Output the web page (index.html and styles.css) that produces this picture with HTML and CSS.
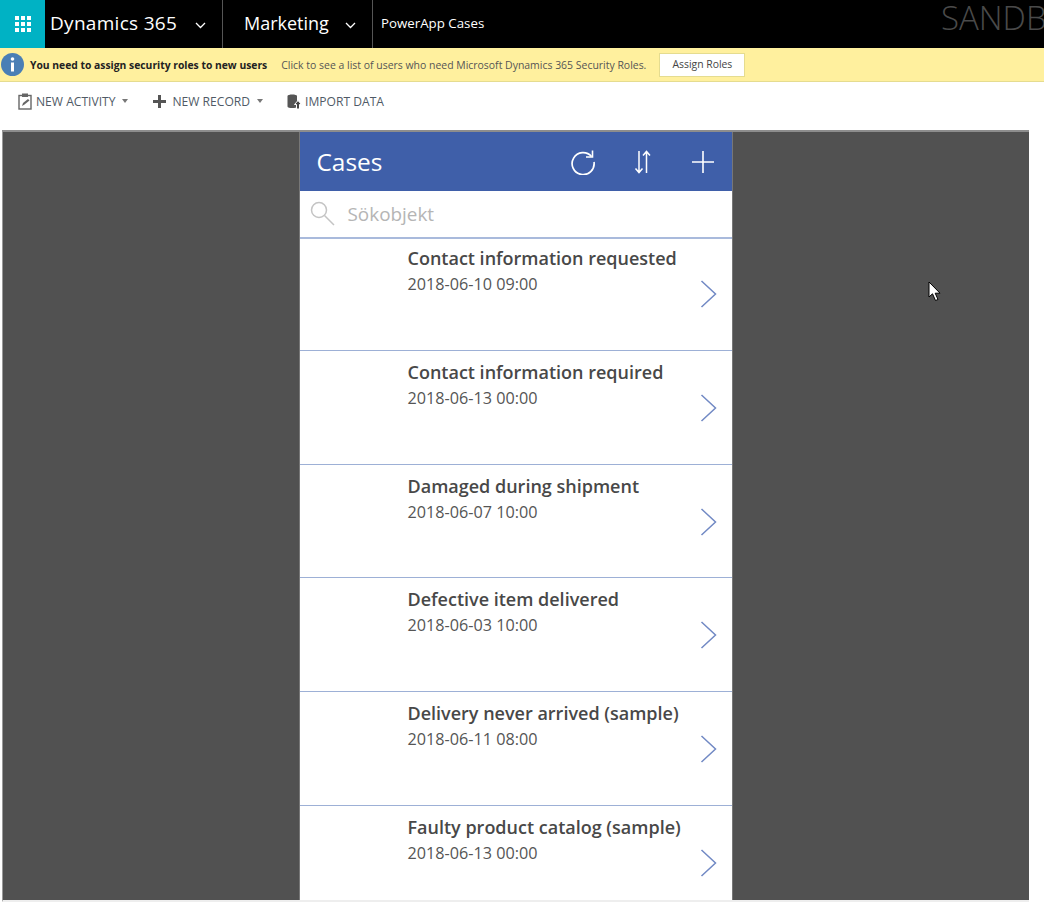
FILE: index.html
```html
<!DOCTYPE html>
<html lang="en">
<head>
  <meta charset="UTF-8" />
  <title>PowerApp Cases</title>
  <link rel="stylesheet" href="styles.css">
</head>
<body>
  <header class="navbar">
    <div class="waffle">
      <svg width="16" height="16" viewBox="0 0 16 16" fill="#fff">
        <rect x="0" y="0" width="4" height="4"/><rect x="6" y="0" width="4" height="4"/><rect x="12" y="0" width="4" height="4"/>
        <rect x="0" y="6" width="4" height="4"/><rect x="6" y="6" width="4" height="4"/><rect x="12" y="6" width="4" height="4"/>
        <rect x="0" y="12" width="4" height="4"/><rect x="6" y="12" width="4" height="4"/><rect x="12" y="12" width="4" height="4"/>
      </svg>
    </div>
    <div class="nav-item nav-brand">
      <span>Dynamics 365</span>
      <svg class="nav-caret" width="11" height="7" viewBox="0 0 11 7"><path d="M1 1l4.500 4.500L10 1" fill="none" stroke="#fff" stroke-width="1.300"/></svg>
    </div>
    <div class="nav-item nav-area">
      <span>Marketing</span>
      <svg class="nav-caret" width="11" height="7" viewBox="0 0 11 7"><path d="M1 1l4.500 4.500L10 1" fill="none" stroke="#fff" stroke-width="1.300"/></svg>
    </div>
    <div class="nav-item nav-page">PowerApp Cases</div>
    <div class="sandbox">SANDBOX</div>
  </header>

  <div class="notice">
    <svg class="notice-icon" width="23" height="23" viewBox="0 0 23 23">
      <circle cx="11.500" cy="11.500" r="11.500" fill="#4a7fb5"/>
      <rect x="10" y="9.500" width="3" height="9" fill="#fff"/>
      <circle cx="11.500" cy="6" r="1.800" fill="#fff"/>
    </svg>
    <strong class="notice-title">You need to assign security roles to new users</strong>
    <span class="notice-text">Click to see a list of users who need Microsoft Dynamics 365 Security Roles.</span>
    <button class="notice-btn">Assign Roles</button>
  </div>

  <div class="toolbar">
    <div class="tool tool-activity">
      <svg width="14" height="17" viewBox="0 0 14 17">
        <rect x="1" y="2.500" width="12" height="13.500" fill="none" stroke="#666" stroke-width="1.400"/>
        <rect x="4" y="0.500" width="6" height="3.500" fill="#666"/>
        <path d="M4 13l1-3 5-4 1.500 1.500-5 4z" fill="#666"/>
      </svg>
      <span>NEW ACTIVITY</span>
      <i class="tool-caret"></i>
    </div>
    <div class="tool tool-record">
      <svg width="13" height="13" viewBox="0 0 13 13"><path d="M5 0h3v5h5v3H8v5H5V8H0V5h5z" fill="#555"/></svg>
      <span>NEW RECORD</span>
      <i class="tool-caret"></i>
    </div>
    <div class="tool tool-import">
      <svg width="15" height="15" viewBox="0 0 15 15">
        <path d="M0.500 2C0.500 0 10 0 10 2V12.500C10 14.500 0.500 14.500 0.500 12.500z" fill="#555"/>
        <path d="M9.500 15V10.500H7.500L11 6.500l3.500 4h-2V15z" fill="#444" stroke="#fff" stroke-width="1"/>
      </svg>
      <span>IMPORT DATA</span>
    </div>
  </div>

  <main class="stage">
    <section class="app">
      <div class="app-header">
        <h1>Cases</h1>
        <svg class="app-icon icon-refresh" width="26" height="26" viewBox="0 0 26 26" fill="none" stroke="#fff" stroke-width="1.700">
          <path d="M21.500 7.500A11 11 0 1 0 24 13"/>
          <path d="M22.500 1.500v6.500H16" stroke-width="1.600"/>
        </svg>
        <svg class="app-icon icon-sort" width="18" height="24" viewBox="0 0 18 24" fill="none" stroke="#fff" stroke-width="1.500">
          <path d="M5 1v21M1.500 18.500L5 22.500l3.500-4"/>
          <path d="M12.500 23V2M9 5.500L12.500 1.500 16 5.500"/>
        </svg>
        <svg class="app-icon icon-add" width="24" height="24" viewBox="0 0 24 24" fill="none" stroke="#fff" stroke-width="1.600">
          <path d="M12 1v22M1 12h22"/>
        </svg>
      </div>
      <div class="search">
        <svg width="25" height="25" viewBox="0 0 25 25" fill="none" stroke="#c4c4c4" stroke-width="1.500">
          <circle cx="9" cy="9" r="7.500"/>
          <path d="M14.500 14.500L24 24"/>
        </svg>
        <span>Sökobjekt</span>
      </div>
      <ul class="cases">
        <li class="case">
          <div class="case-text">
            <div class="case-title">Contact information requested</div>
            <div class="case-date">2018-06-10 09:00</div>
          </div>
          <svg class="chevron" width="17" height="28" viewBox="0 0 17 28"><path d="M1.500 1L15.500 14 1.500 27" fill="none" stroke="#7189c4" stroke-width="1.500"/></svg>
        </li>
        <li class="case">
          <div class="case-text">
            <div class="case-title">Contact information required</div>
            <div class="case-date">2018-06-13 00:00</div>
          </div>
          <svg class="chevron" width="17" height="28" viewBox="0 0 17 28"><path d="M1.500 1L15.500 14 1.500 27" fill="none" stroke="#7189c4" stroke-width="1.500"/></svg>
        </li>
        <li class="case">
          <div class="case-text">
            <div class="case-title">Damaged during shipment</div>
            <div class="case-date">2018-06-07 10:00</div>
          </div>
          <svg class="chevron" width="17" height="28" viewBox="0 0 17 28"><path d="M1.500 1L15.500 14 1.500 27" fill="none" stroke="#7189c4" stroke-width="1.500"/></svg>
        </li>
        <li class="case">
          <div class="case-text">
            <div class="case-title">Defective item delivered</div>
            <div class="case-date">2018-06-03 10:00</div>
          </div>
          <svg class="chevron" width="17" height="28" viewBox="0 0 17 28"><path d="M1.500 1L15.500 14 1.500 27" fill="none" stroke="#7189c4" stroke-width="1.500"/></svg>
        </li>
        <li class="case">
          <div class="case-text">
            <div class="case-title">Delivery never arrived (sample)</div>
            <div class="case-date">2018-06-11 08:00</div>
          </div>
          <svg class="chevron" width="17" height="28" viewBox="0 0 17 28"><path d="M1.500 1L15.500 14 1.500 27" fill="none" stroke="#7189c4" stroke-width="1.500"/></svg>
        </li>
        <li class="case">
          <div class="case-text">
            <div class="case-title">Faulty product catalog (sample)</div>
            <div class="case-date">2018-06-13 00:00</div>
          </div>
          <svg class="chevron" width="17" height="28" viewBox="0 0 17 28"><path d="M1.500 1L15.500 14 1.500 27" fill="none" stroke="#7189c4" stroke-width="1.500"/></svg>
        </li>
      </ul>
    </section>
    <svg class="cursor" width="14" height="21" viewBox="0 0 14 21">
      <path d="M1 1v15l3.500-3.200L7.500 19.500l2.500-1-2.800-6.300H12z" fill="#fff" stroke="#000" stroke-width="1"/>
    </svg>
  </main>
</body>
</html>
```

FILE: styles.css
```css
* {
  box-sizing: border-box;
}

html, body {
  overflow: hidden;
}

body {
  margin: 0;
  height: 916px;
  background: #fff;
  font-family: 'Open Sans', sans-serif;
}

/* top bar */
.navbar {
  display: flex;
  align-items: stretch;
  height: 48px;
  background: #000;
  color: #fff;
  overflow: hidden;
}

.waffle {
  width: 45px;
  background: #00b2c4;
  display: flex;
  align-items: center;
  justify-content: center;
  flex: none;
}

.nav-item {
  display: flex;
  align-items: center;
  flex: none;
  padding-bottom: 2px;
}

.nav-brand {
  width: 178px;
  padding-left: 5px;
  font-size: 19px;
  letter-spacing: 0.3px;
  border-right: 1px solid #555;
}

.nav-brand .nav-caret {
  margin: 4px 0 0 18px;
}

.nav-area {
  width: 150px;
  padding-left: 21px;
  font-size: 18px;
  border-right: 1px solid #555;
}

.nav-area .nav-caret {
  margin: 4px 0 0 16px;
}

.nav-page {
  padding-left: 8px;
  font-size: 13.300px;
}

.sandbox {
  margin-left: auto;
  margin-right: -60px;
  width: 163px;
  flex: none;
  font-size: 33px;
  font-weight: 300;
  line-height: 36px;
  color: #4a4a4a;
  white-space: nowrap;
}

/* notification */
.notice {
  display: flex;
  align-items: center;
  height: 34px;
  background: #fff09e;
  border-bottom: 1px solid #e5dc90;
  font-size: 10.460px;
  padding-left: 1px;
}

.notice-title {
  margin-left: 6px;
  color: #222;
  font-weight: 700;
  font-size: 10.330px;
}

.notice-text {
  margin-left: 14px;
  color: #555;
}

.notice-btn {
  margin-left: 13px;
  width: 86px;
  height: 24px;
  padding: 0 0 2px;
  background: #fff;
  border: 1px solid #e5dc90;
  color: #444;
  font-family: inherit;
  font-size: 10.400px;
}

/* command bar */
.toolbar {
  display: flex;
  align-items: center;
  height: 40px;
  padding: 0 0 2px 18px;
  margin-bottom: 8px;
  color: #505a66;
  font-size: 12.100px;
}

.tool {
  display: flex;
  align-items: center;
}

.tool span {
  margin-left: 4px;
}

.tool-record {
  margin-left: 25px;
}

.tool-record span {
  margin-left: 6px;
}

.tool-import {
  margin-left: 24px;
}

.tool-import span {
  margin-left: 3px;
}

.tool-caret {
  width: 0;
  height: 0;
  margin-left: 7px;
  border-left: 3.500px solid transparent;
  border-right: 3.500px solid transparent;
  border-top: 4px solid #777;
}

/* canvas */
.stage {
  position: relative;
  width: 1027px;
  height: 772px;
  margin-left: 2px;
  background: #515151;
  border-top: 2px solid #8d8d8d;
  border-left: 1px solid #999;
  border-bottom: 2px solid #eee;
  display: flex;
  justify-content: center;
  padding-right: 1px;
}

.app {
  width: 434px;
  background: #fff;
  border-left: 1px solid #777;
  border-right: 1px solid #777;
  overflow: hidden;
}

.app-header {
  display: flex;
  align-items: center;
  height: 59px;
  padding-left: 17px;
  background: #3f5fa9;
  color: #fff;
}

.app-header h1 {
  margin: 0;
  margin-right: auto;
  font-size: 24.400px;
  font-weight: 400;
}

.icon-refresh {
  margin-right: 38px;
}

.icon-sort {
  margin-right: 39px;
}

.icon-add {
  margin-right: 17px;
}

.search {
  display: flex;
  align-items: center;
  height: 48px;
  padding: 0 0 1px 10px;
  border-bottom: 2px solid #a9badc;
  color: #b5b5b5;
  font-size: 18.900px;
}

.search span {
  margin-left: 13px;
}

.cases {
  list-style: none;
  margin: -1.800px 0 0;
  padding: 0;
}

.case {
  display: flex;
  justify-content: space-between;
  height: 113.750px;
  padding-left: 108px;
  border-bottom: 1px solid #9db0d6;
}

.case-text {
  padding-top: 8px;
}

.case-title {
  color: #484848;
  font-size: 18px;
  font-weight: 600;
  line-height: 27px;
}

.case-date {
  color: #555;
  font-size: 16.200px;
  line-height: 24px;
}

.chevron {
  margin: 43px 15px 0 0;
}

.cursor {
  position: absolute;
  left: 925px;
  top: 149px;
}
```
